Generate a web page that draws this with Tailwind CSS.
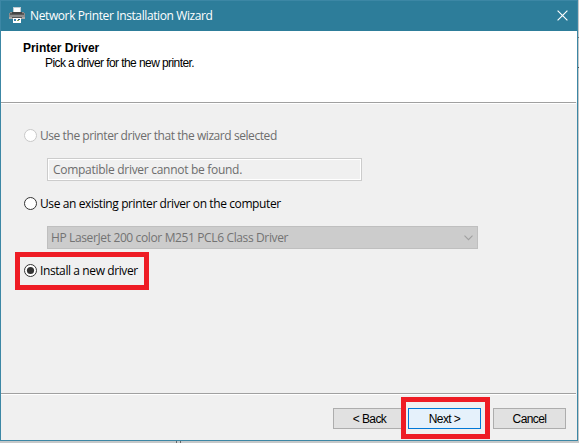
<!DOCTYPE html>
<html lang="en">
<head>
<meta charset="utf-8">
<title>Network Printer Installation Wizard</title>
<script src="https://cdn.jsdelivr.net/npm/@tailwindcss/browser@4"></script>
</head>
<body class="relative w-[579px] h-[443px] overflow-hidden bg-[#c6c8c9] font-['Open_Sans','Noto_Sans',sans-serif] text-[12px] leading-[16px] text-black whitespace-nowrap">
<div class="flex flex-col w-[578px] h-[441px] border border-[#3c87a5] bg-[#f0f0f0]">
  <header class="flex h-[30px] shrink-0 items-center bg-[#2d7d9a] pl-2 pr-[9px] text-white">
    <svg class="w-4 h-4 mr-[5px] mb-[2px]" viewBox="0 0 16 16" shape-rendering="crispEdges">
      <path fill="#c3ccd2" d="M4 0h8v6H4z"/><path fill="#fff" d="M5 1h6v5H5z"/>
      <path fill="#8b8b8b" d="M1 5h14v1h1v6H0V6h1z"/>
      <path fill="#5c5c5c" d="M1 6h14v2H1z"/><path fill="#454545" d="M3 5h10v2H3z"/>
      <path fill="#8e8e8e" d="M1 8h14v2H1z"/><path fill="#a8a8a8" d="M0 10h16v2H0z"/><path fill="#555" d="M3 10h10v1H3z"/>
      <path fill="#fff" d="M4 11h8v5H4z"/><path fill="#3d7fae" d="M5 12h2v2H5z"/><path fill="#285074" d="M9 12h2v1H9z"/><path fill="#82a65b" d="M8 13h2v1H8z"/>
    </svg>
    <h1 class="w-[200px] tracking-[-0.39px]">Network Printer Installation Wizard</h1>
    <svg class="ml-auto mb-[1px] w-[11px] h-[11px]" viewBox="0 0 11 11" fill="none" stroke="#fff" stroke-width="1.15"><path d="M.6.6l9.8 9.8M10.4.6L.6 10.4"/></svg>
  </header>
  <section class="h-[71px] shrink-0 bg-white pt-[10px] pl-[22px] font-['Liberation_Sans',sans-serif] text-[12px] leading-[15px]">
    <h2 class="font-bold tracking-[-0.04px]">Printer Driver</h2>
    <p class="pl-[22px] tracking-[-0.58px]">Pick a driver for the new printer.</p>
  </section>
  <div class="mr-px h-[2px] shrink-0 border-t border-[#a0a0a0] bg-white"></div>
  <main class="h-[289px] shrink-0 pt-[24px] pl-[23px]">
    <div class="flex h-4 items-start text-[#6d6d6d]">
      <svg class="shrink-0 mt-px w-[13px] h-[13px] mr-[3px]" viewBox="0 0 13 13"><circle cx="6.5" cy="6.5" r="6" fill="#fff" stroke="#c8c8c8"/></svg>
      <label class="tracking-[-0.43px]">Use the printer driver that the wizard selected</label>
    </div>
    <div class="mt-[14px] ml-[23px] flex h-[23px] w-[315px] items-center border border-[#ccc] bg-[#f0f0f0] pl-[5px] text-[#6d6d6d] tracking-[-0.29px] inset-ring inset-ring-white">Compatible driver cannot be found.</div>
    <div class="mt-[15px] flex h-4 items-start">
      <svg class="shrink-0 mt-px w-[13px] h-[13px] mr-[3px]" viewBox="0 0 13 13"><circle cx="6.5" cy="6.5" r="6" fill="#fff" stroke="#333"/></svg>
      <label class="tracking-[-0.4px]">Use an existing printer driver on the computer</label>
    </div>
    <div class="mt-[14px] ml-[23px] flex h-[23px] w-[431px] items-center justify-between border border-[#bfbfbf] bg-[#ccc] pl-[3px] pr-1 text-[#737373]">
      <span class="tracking-[-0.37px]">HP LaserJet 200 color M251 PCL6 Class Driver</span>
      <svg class="w-[9px] h-[6px]" viewBox="0 0 9 6" fill="none" stroke="#a0a0a0" stroke-width="1.1"><path d="M.5.7l4 4 4-4"/></svg>
    </div>
    <div class="mt-[3px] ml-[-9px] flex h-[38px] w-[134px] items-center border-5 border-[#ee1c24] pl-1">
      <svg class="shrink-0 mb-px w-[13px] h-[13px] mr-[3px]" viewBox="0 0 13 13"><circle cx="6.5" cy="6.5" r="6" fill="#fff" stroke="#333"/><circle cx="6.5" cy="6.5" r="3.6" fill="#333"/></svg>
      <label class="tracking-[-0.4px]">Install a new driver</label>
    </div>
  </main>
  <div class="mr-px h-[2px] shrink-0 border-t border-[#a0a0a0] bg-white"></div>
  <footer class="flex grow items-start pt-[2px] pl-[332px] font-['Liberation_Sans',sans-serif] text-[12px]">
    <button class="mt-[11px] h-[21px] w-[73px] border border-[#adadad] bg-[#e1e1e1] tracking-[-0.6px]">&lt; Back</button>
    <div class="relative z-10 ml-[-5px] h-[42px] w-[89px] border-5 border-[#ee1c24] pt-[6px] pl-[2px]">
      <button class="block h-[21px] w-[73px] border border-[#0078d7] bg-[#e5f1fb] tracking-[-0.6px]">Next &gt;</button>
    </div>
    <button class="ml-[3px] mt-[11px] h-[21px] w-[73px] border border-[#adadad] bg-[#e1e1e1] tracking-[-0.6px]">Cancel</button>
  </footer>
</div>
<div class="flex gap-[3px] pl-[176px]"><i class="h-[2px] w-px bg-[#666]"></i><i class="h-[2px] w-px bg-[#666]"></i></div>
<div class="absolute left-[578px] top-[37px] h-px w-px bg-[#777]"></div>
<div class="absolute left-[578px] top-[67px] h-px w-px bg-[#555]"></div>
</body>
</html>
